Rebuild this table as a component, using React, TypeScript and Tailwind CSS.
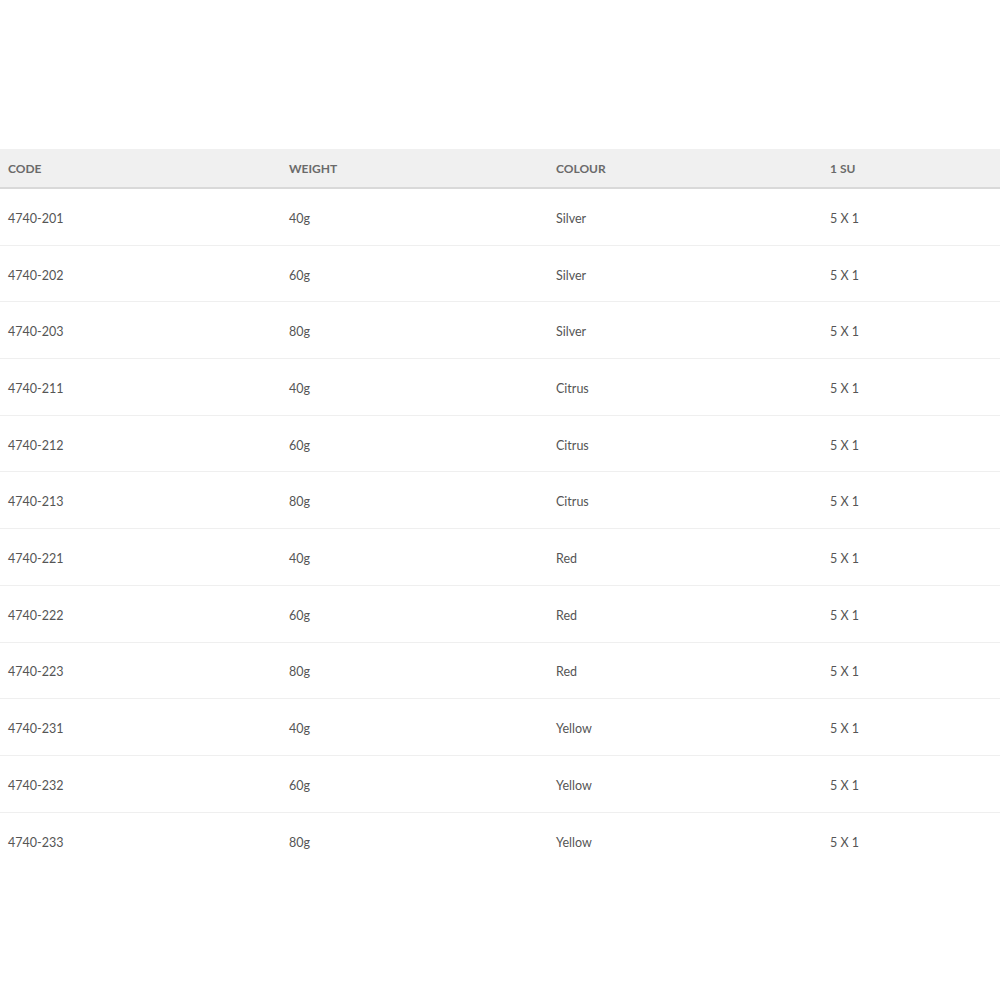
import React from 'react';

interface Row {
  code: string;
  weight: string;
  colour: string;
  su: string;
}

const ROWS: Row[] = [
  { code: '4740-201', weight: '40g', colour: 'Silver', su: '5 X 1' },
  { code: '4740-202', weight: '60g', colour: 'Silver', su: '5 X 1' },
  { code: '4740-203', weight: '80g', colour: 'Silver', su: '5 X 1' },
  { code: '4740-211', weight: '40g', colour: 'Citrus', su: '5 X 1' },
  { code: '4740-212', weight: '60g', colour: 'Citrus', su: '5 X 1' },
  { code: '4740-213', weight: '80g', colour: 'Citrus', su: '5 X 1' },
  { code: '4740-221', weight: '40g', colour: 'Red', su: '5 X 1' },
  { code: '4740-222', weight: '60g', colour: 'Red', su: '5 X 1' },
  { code: '4740-223', weight: '80g', colour: 'Red', su: '5 X 1' },
  { code: '4740-231', weight: '40g', colour: 'Yellow', su: '5 X 1' },
  { code: '4740-232', weight: '60g', colour: 'Yellow', su: '5 X 1' },
  { code: '4740-233', weight: '80g', colour: 'Yellow', su: '5 X 1' },
];

const COLS = 'grid grid-cols-[281px_267px_274px_1fr]';

export default function App() {
  return (
    <div className="w-[1000px] h-[1000px] bg-white pt-[149px] font-['Lato','Liberation_Sans',sans-serif]">
      {/* Header */}
      <div className={`${COLS} h-[40px] pt-[2px] items-center bg-[#f0f0f0] border-b-2 border-[#d9d9d9] text-[12px] font-bold uppercase text-[#6a6a6a]`}>
        <div className="pl-2">Code</div>
        <div className="pl-2">Weight</div>
        <div className="pl-2">Colour</div>
        <div className="pl-2">1 SU</div>
      </div>

      {/* Body */}
      {ROWS.map((row, i) => (
        <div
          key={row.code}
          className={`${COLS} h-[56.7px] pt-[5px] items-center text-[12.5px] text-[#555] ${
            i < ROWS.length - 1 ? 'border-b border-[#efefef]' : ''
          }`}
        >
          <div className="pl-2">{row.code}</div>
          <div className="pl-2">{row.weight}</div>
          <div className="pl-2">{row.colour}</div>
          <div className="pl-2">{row.su}</div>
        </div>
      ))}
    </div>
  );
}
